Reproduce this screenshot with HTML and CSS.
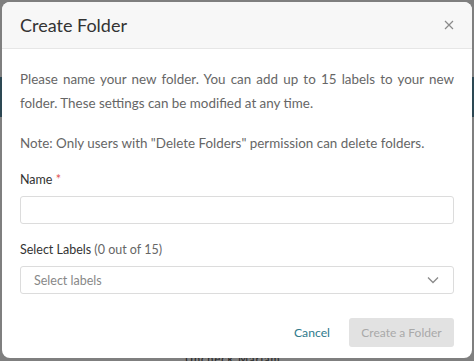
FILE: index.html
```html
<!DOCTYPE html>
<html>
<head>
<meta charset="utf-8">
<link rel="stylesheet" href="styles.css">
</head>
<body>
<div class="backdrop">
  <div class="band"></div>
  <div class="under-text">Uncheck Mariam</div>
</div>
<div class="modal">
  <div class="modal-header">
    <h1 class="title">Create Folder</h1>
    <button class="close" aria-label="Close">
      <svg width="10" height="10" viewBox="0 0 10 10"><path d="M1 1L9 9M9 1L1 9" stroke="#8a8a8a" stroke-width="1.2" fill="none"/></svg>
    </button>
  </div>
  <div class="modal-body">
    <p class="intro">Please name your new folder. You can add up to 15 labels to your new folder. These settings can be modified at any time.</p>
    <p class="note">Note: Only users with "Delete Folders" permission can delete folders.</p>
    <label class="field-label">Name <span class="req">*</span></label>
    <div class="input"></div>
    <label class="field-label">Select Labels <span class="count">(0 out of 15)</span></label>
    <div class="select">
      <span class="placeholder">Select labels</span>
      <svg width="12" height="8" viewBox="0 0 12 8"><path d="M1 1.5L6 6.5L11 1.5" stroke="#8a8a8a" stroke-width="1.3" fill="none"/></svg>
    </div>
  </div>
  <div class="modal-footer">
    <button class="cancel">Cancel</button>
    <button class="primary" disabled>Create a Folder</button>
  </div>
</div>
</body>
</html>
```
FILE: styles.css
```css
html, body {
  margin: 0;
  padding: 0;
}
body {
  width: 474px;
  height: 361px;
  background: #7f7f7f;
  font-family: Lato, "Open Sans", sans-serif;
  position: relative;
  overflow: hidden;
}
.backdrop {
  position: absolute;
  inset: 0;
}
.band {
  position: absolute;
  left: 0;
  right: 0;
  top: 77px;
  height: 40px;
  background: #2d4853;
}
.under-text {
  position: absolute;
  left: 185px;
  top: 353px;
  font-size: 11px;
  line-height: 12px;
  color: #222;
  letter-spacing: 1px;
}
.modal {
  position: absolute;
  left: 2px;
  top: 2px;
  width: 470px;
  height: 356px;
  background: #fff;
  border-radius: 8px;
  overflow: hidden;
  display: flex;
  flex-direction: column;
}
.modal-header {
  height: 46px;
  background: #f7f7f7;
  border-bottom: 1px solid #e6e6e6;
  display: flex;
  align-items: center;
  justify-content: space-between;
  padding: 0 18px 0 18px;
}
.title {
  margin: 0;
  font-size: 18px;
  font-weight: 400;
  color: #333;
}
.close {
  border: 0;
  background: none;
  padding: 0;
  display: flex;
}
.modal-body {
  padding: 18px 18px 0 18px;
}
p {
  margin: 0;
  font-size: 13.4px;
  line-height: 24px;
  color: #666;
}
.intro {
  text-align: justify;
}
.note {
  margin-top: 16px;
}
.field-label {
  display: block;
  font-size: 12.5px;
  line-height: 20px;
  color: #333;
  margin-top: 15px;
}
.field-label + .input {
  margin-top: 6px;
}
.select {
  margin-top: 6px;
}
.field-label:nth-of-type(2) {
  margin-top: 16px;
}
.req {
  color: #e0524f;
}
.count {
  color: #666;
}
.input, .select {
  height: 26px;
  border: 1px solid #dcdcdc;
  border-radius: 3px;
  box-sizing: content-box;
}
.select {
  display: flex;
  align-items: center;
  justify-content: space-between;
  padding: 0 14px 0 13px;
}
.placeholder {
  font-size: 12.5px;
  color: #888;
}
.modal-footer {
  margin-top: auto;
  padding: 0 18px 11px 18px;
  display: flex;
  justify-content: flex-end;
  align-items: center;
  gap: 19px;
}
.cancel {
  border: 0;
  background: none;
  font-family: inherit;
  font-size: 12.2px;
  color: #2f7a8c;
  padding: 0;
}
.primary {
  height: 29px;
  width: 105px;
  padding: 0;
  border: 0;
  border-radius: 3px;
  background: #e2e2e2;
  color: #a9a9a9;
  font-family: inherit;
  font-size: 12px;
}
```
